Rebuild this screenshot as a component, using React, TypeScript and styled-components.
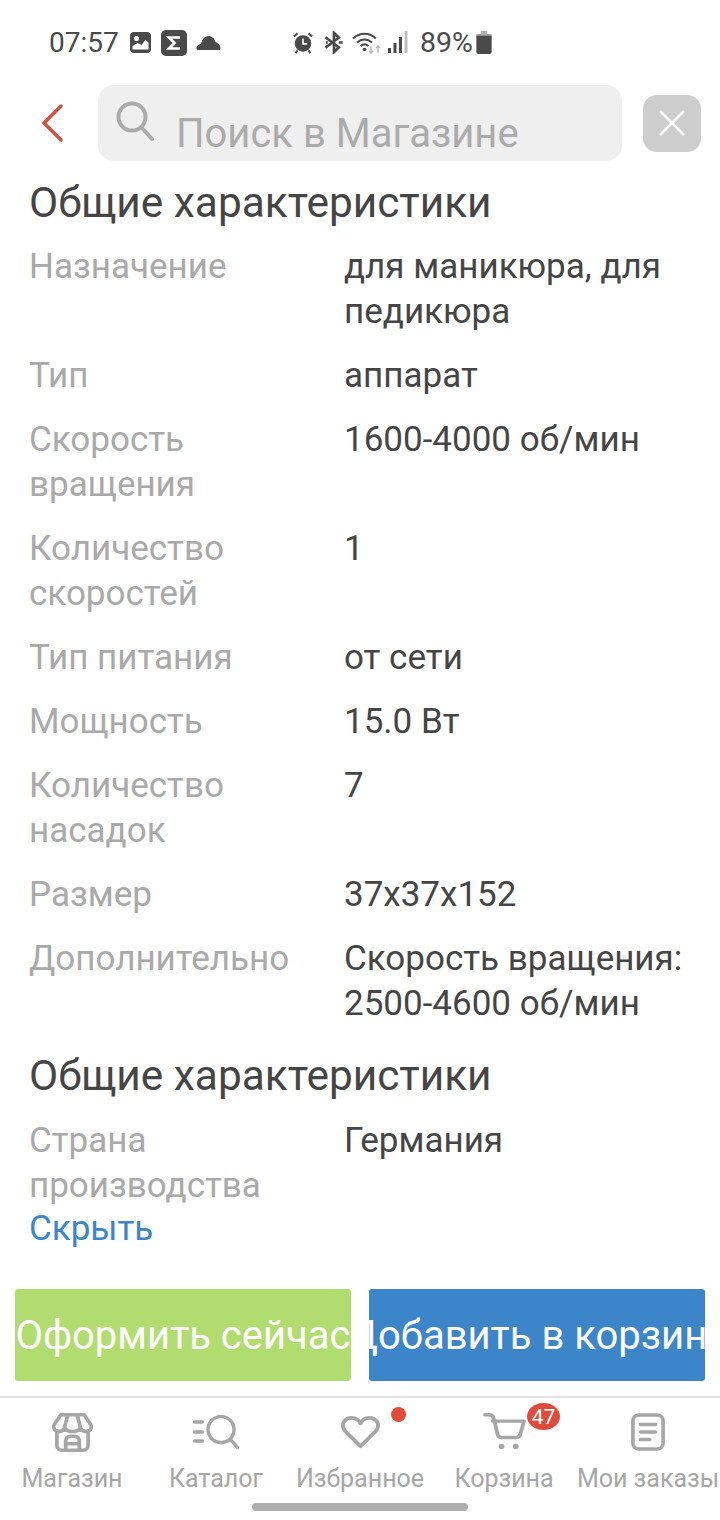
import React from "react";
import styled, { createGlobalStyle } from "styled-components";

const GlobalStyle = createGlobalStyle`
  html, body {
    margin: 0;
    padding: 0;
    background: #fff;
    font-family: Roboto, "Liberation Sans", sans-serif;
  }
`;

const Page = styled.div`
  width: 720px;
  height: 1520px;
  display: flex;
  flex-direction: column;
  overflow: hidden;
  background: #fff;
`;

const StatusBar = styled.div`
  height: 85px;
  flex: none;
  box-sizing: border-box;
  padding-left: 49px;
  display: flex;
  align-items: center;
  color: #4a4a4a;
  font-size: 28px;
`;

const StatusLeft = styled.div`
  width: 241px;
  display: flex;
  align-items: center;
  gap: 8px;
`;

const StatusRight = styled.div`
  display: flex;
  align-items: center;
  gap: 8px;
`;

const Clock = styled.span`
  width: 73px;
`;

const Percent = styled.span`
  font-size: 28.5px;
  margin-left: 4px;
`;

const Header = styled.header`
  flex: none;
  height: 76px;
  display: flex;
  align-items: center;
  padding-left: 41px;
`;

const BackButton = styled.div`
  width: 57px;
  height: 76px;
  display: flex;
  align-items: center;
`;

const SearchBox = styled.div`
  width: 524px;
  height: 76px;
  box-sizing: border-box;
  border-radius: 16px;
  background: #efefef;
  display: flex;
  padding-left: 18px;
`;

const SearchIcon = styled.svg`
  margin-top: 16px;
  flex: none;
`;

const SearchText = styled.span`
  margin: 26px 0 0 22px;
  font-size: 40px;
  line-height: 46px;
  color: #ababab;
`;

const CloseButton = styled.div`
  width: 58px;
  height: 57px;
  margin-left: 21px;
  border-radius: 14px;
  background: #cdcdcd;
  display: flex;
  align-items: center;
  justify-content: center;
`;

const Content = styled.main`
  flex: 1;
  padding: 17px 0 0 29px;
`;

const SectionTitle = styled.h2<{ $top?: number; $bottom?: number }>`
  margin: ${(p) => p.$top ?? 0}px 0 ${(p) => p.$bottom ?? 16}px;
  font-size: 42.4px;
  line-height: 50px;
  font-weight: 400;
  color: #454545;
`;

const SpecList = styled.dl`
  margin: 0;
  display: flex;
  flex-direction: column;
  gap: 19px;
`;

const SpecRow = styled.div`
  display: grid;
  grid-template-columns: 315px 1fr;
  font-size: 35px;
  line-height: 45px;
`;

const SpecName = styled.dt`
  color: #a9a9a9;
`;

const SpecValue = styled.dd`
  margin: 0;
  color: #454545;
  width: 350px;
`;

const HideLink = styled.div`
  font-size: 35px;
  line-height: 42px;
  color: #3b85c8;
`;

const Actions = styled.div`
  flex: none;
  display: grid;
  grid-template-columns: 336px 336px;
  gap: 18px;
  padding: 0 15px 15px;
`;

const ActionButton = styled.div<{ $bg: string }>`
  height: 92px;
  border-radius: 3px;
  background: ${(p) => p.$bg};
  color: #fff;
  font-size: 40px;
  display: flex;
  align-items: center;
  justify-content: center;
  white-space: nowrap;
  overflow: hidden;
`;

const TabBar = styled.nav`
  flex: none;
  height: 122px;
  border-top: 2px solid #e2e2e2;
  display: grid;
  grid-template-columns: repeat(5, 144px);
  position: relative;
`;

const Tab = styled.div`
  display: flex;
  flex-direction: column;
  align-items: center;
  padding-top: 12px;
  font-size: 25px;
  line-height: 30px;
  color: #a6a6a6;
  white-space: nowrap;
`;

const TabIcon = styled.div`
  position: relative;
  width: 44px;
  height: 44px;
  margin-bottom: 10px;
  display: flex;
  align-items: center;
  justify-content: center;

  svg {
    flex: none;
  }
`;

const Dot = styled.span`
  position: absolute;
  left: 53px;
  top: -3px;
  width: 15px;
  height: 15px;
  border-radius: 50%;
  background: #e04b3a;
`;

const CountBadge = styled.span`
  position: absolute;
  left: 45px;
  top: -7px;
  width: 33px;
  height: 27px;
  border-radius: 50%;
  background: #dc4b3b;
  color: #fff;
  font-size: 21px;
  line-height: 28px;
  text-align: center;
`;

const HomeIndicator = styled.div`
  position: absolute;
  left: 252px;
  bottom: 9px;
  width: 216px;
  height: 8px;
  border-radius: 4px;
  background: #adadad;
`;

const specs1 = [
  ["Назначение", "для маникюра, для педикюра"],
  ["Тип", "аппарат"],
  ["Скорость вращения", "1600-4000 об/мин"],
  ["Количество скоростей", "1"],
  ["Тип питания", "от сети"],
  ["Мощность", "15.0 Вт"],
  ["Количество насадок", "7"],
  ["Размер", "37x37x152"],
  ["Дополнительно", "Скорость вращения: 2500-4600 об/мин"],
];

const ImageIcon = () => (
  <svg width="21" height="21" viewBox="0 0 21 21">
    <rect x="0" y="0" width="21" height="21" rx="4" fill="#4a4a4a" />
    <circle cx="6.500" cy="6.500" r="2.500" fill="#fff" />
    <path d="M2.500 17.500v-3.500l5-3 4 2 4-5 3 2.500v7z" fill="#fff" />
  </svg>
);

const SigmaIcon = () => (
  <svg width="26" height="26" viewBox="0 0 26 26" style={{ marginLeft: 2 }}>
    <rect width="26" height="26" rx="5" fill="#4a4a4a" />
    <path d="M19 7.500H8l5.500 5.500L8 18.500h11" fill="none" stroke="#fff" strokeWidth="2.600" />
  </svg>
);

const CloudIcon = () => (
  <svg width="25" height="14" viewBox="0 0 25 14" style={{ marginLeft: 1 }}>
    <path d="M1 14c-1.500-2.500 0-5.500 4-6C6 3 9 0 12.500 0c3.500 0 6 2.500 7 6 3.500 1 6 4.500 4.500 8z" fill="#4a4a4a" />
  </svg>
);

const AlarmIcon = () => (
  <svg width="22" height="22" viewBox="0 0 22 24" style={{ marginLeft: 2 }}>
    <circle cx="11" cy="12.500" r="9" fill="#4a4a4a" />
    <path d="M11 7v6h4.500" fill="none" stroke="#fff" strokeWidth="1.800" />
    <path d="M1 5l4-3.500M21 5l-4-3.500M5 20l-2 3M17 20l2 3" stroke="#4a4a4a" strokeWidth="2.200" fill="none" />
  </svg>
);

const BluetoothIcon = () => (
  <svg width="20" height="23" viewBox="0 0 20 24" style={{ marginLeft: 2 }}>
    <path
      d="M1 6.500L15 17l-5 5V2l5 5L1 17.500"
      fill="none"
      stroke="#4a4a4a"
      strokeWidth="2.800"
    />
    <path d="M15 12h4M1.500 12h2" stroke="#4a4a4a" strokeWidth="2.800" />
  </svg>
);

const WifiIcon = () => (
  <svg width="30" height="24" viewBox="0 0 30 24">
    <path d="M1 7.500C7.500 1 17.500 1 24 7.500" fill="none" stroke="#4a4a4a" strokeWidth="2" />
    <path d="M5 11.500c4.500-4 10.500-4 15 0" fill="none" stroke="#4a4a4a" strokeWidth="2" />
    <path d="M8.500 15c2.500-2 5.500-2 8 0" fill="none" stroke="#4a4a4a" strokeWidth="2" />
    <circle cx="12.500" cy="18.500" r="1.800" fill="#4a4a4a" />
    <path d="M19 15v7m-2-2l2 2 2-2" fill="none" stroke="#b5b5b5" strokeWidth="1.300" />
    <path d="M26 22v-7m-2 2l2-2 2 2" fill="none" stroke="#b5b5b5" strokeWidth="1.300" />
  </svg>
);

const SignalIcon = () => (
  <svg width="20" height="23" viewBox="0 0 20 23" style={{ marginLeft: -2 }}>
    <rect x="0" y="17" width="3" height="5" fill="#4a4a4a" />
    <rect x="5.500" y="12" width="3" height="10" fill="#4a4a4a" />
    <rect x="11" y="6" width="3" height="16" fill="#4a4a4a" />
    <rect x="16.500" y="0" width="3" height="22" fill="#bdbdbd" />
  </svg>
);

const BatteryIcon = () => (
  <svg width="16" height="23" viewBox="0 0 16 24" style={{ marginLeft: -5 }}>
    <rect x="5" y="0" width="6" height="3" fill="#a8a8a8" />
    <rect x="0" y="3" width="16" height="3" rx="1" fill="#a8a8a8" />
    <path d="M0 5h16v17a2 2 0 0 1-2 2H2a2 2 0 0 1-2-2z" fill="#4a4a4a" />
  </svg>
);

const StoreIcon = () => (
  <svg width="41" height="39" viewBox="1 1 42 42" preserveAspectRatio="none" fill="none" stroke="#a6a6a6" strokeWidth="3.800" strokeLinejoin="round" strokeLinecap="round">
    <path d="M6 20v16a5 5 0 0 0 5 5h22a5 5 0 0 0 5-5V20" />
    <path d="M10 3h24l7 11c1 4-1.500 7-5 7-3 0-5-2-6-4-1 2-4 4-8 4s-7-2-8-4c-1 2-3 4-6 4-3.500 0-6-3-5-7z" />
    <path d="M17 4l-3 12M27 4l3 12" />
    <path d="M15 40V31a5 5 0 0 1 5-5h4a5 5 0 0 1 5 5v9M15 34h14" />
  </svg>
);

const CatalogIcon = () => (
  <svg width="46" height="34" viewBox="0 0 46 34" fill="none" stroke="#a6a6a6" strokeWidth="3.400" strokeLinecap="round">
    <circle cx="28" cy="14.500" r="13" />
    <path d="M38 25l7 8" />
    <path d="M1.500 7h8M1.500 17h8M1.500 26h8" />
  </svg>
);

const HeartIcon = () => (
  <svg width="39" height="33" viewBox="0 0 40 36" preserveAspectRatio="none" fill="none" stroke="#a6a6a6" strokeWidth="4" strokeLinejoin="round">
    <path d="M20 33L4 16C-1 9 4 2 11 2c4 0 7 2 9 6 2-4 5-6 9-6 7 0 12 7 7 14z" />
  </svg>
);

const CartIcon = () => (
  <svg width="43" height="38" viewBox="0 0 44 42" preserveAspectRatio="none" fill="none" stroke="#a6a6a6" strokeWidth="3.800" strokeLinejoin="round" strokeLinecap="round">
    <path d="M2 2h4c3 0 4.500 1.500 5 4l4 18c.5 2 2 3 4 3h15c2 0 3.500-1 4-3l4-15H10" />
    <circle cx="19" cy="37" r="3" fill="#a6a6a6" stroke="none" />
    <circle cx="33.500" cy="37" r="3" fill="#a6a6a6" stroke="none" />
  </svg>
);

const OrdersIcon = () => (
  <svg width="34" height="38" viewBox="0 0 36 40" fill="none" stroke="#a6a6a6" strokeWidth="3.800" strokeLinecap="round">
    <rect x="2" y="2" width="32" height="36" rx="6" />
    <path d="M10 12h16M10 20h16M10 28h10" />
  </svg>
);

export default function App() {
  return (
    <Page>
      <GlobalStyle />
      <StatusBar>
        <StatusLeft>
          <Clock>07:57</Clock>
          <ImageIcon />
          <SigmaIcon />
          <CloudIcon />
        </StatusLeft>
        <StatusRight>
          <AlarmIcon />
          <BluetoothIcon />
          <WifiIcon />
          <SignalIcon />
          <Percent>89%</Percent>
          <BatteryIcon />
        </StatusRight>
      </StatusBar>
      <Header>
        <BackButton>
          <svg width="22" height="38" viewBox="0 0 22 38" fill="none" stroke="#cf5340" strokeWidth="3.500" strokeLinecap="round">
            <path d="M20 2L3 19l17 17" />
          </svg>
        </BackButton>
        <SearchBox>
          <SearchIcon width="38" height="40" viewBox="0 0 38 40" fill="none" stroke="#ababab" strokeWidth="4" strokeLinecap="round">
            <circle cx="16" cy="16" r="13.500" />
            <path d="M26 27l10 11" />
          </SearchIcon>
          <SearchText>Поиск в Магазине</SearchText>
        </SearchBox>
        <CloseButton>
          <svg width="26" height="26" viewBox="0 0 26 26" stroke="#fff" strokeWidth="2.500">
            <path d="M1 1l24 24M25 1L1 25" />
          </svg>
        </CloseButton>
      </Header>
      <Content>
        <SectionTitle>Общие характеристики</SectionTitle>
        <SpecList>
          {specs1.map(([name, value]) => (
            <SpecRow key={name}>
              <SpecName>{name}</SpecName>
              <SpecValue>{value}</SpecValue>
            </SpecRow>
          ))}
        </SpecList>
        <SectionTitle $top={25} $bottom={17}>Общие характеристики</SectionTitle>
        <SpecRow>
          <SpecName>Страна производства</SpecName>
          <SpecValue>Германия</SpecValue>
        </SpecRow>
        <HideLink>Скрыть</HideLink>
      </Content>
      <Actions>
        <ActionButton $bg="#b1dc6f">Оформить сейчас</ActionButton>
        <ActionButton $bg="#3b85c8">Добавить в корзину</ActionButton>
      </Actions>
      <TabBar>
        <Tab>
          <TabIcon>
            <StoreIcon />
          </TabIcon>
          Магазин
        </Tab>
        <Tab>
          <TabIcon>
            <CatalogIcon />
          </TabIcon>
          Каталог
        </Tab>
        <Tab>
          <TabIcon>
            <HeartIcon />
            <Dot />
          </TabIcon>
          Избранное
        </Tab>
        <Tab>
          <TabIcon>
            <CartIcon />
            <CountBadge>47</CountBadge>
          </TabIcon>
          Корзина
        </Tab>
        <Tab>
          <TabIcon>
            <OrdersIcon />
          </TabIcon>
          Мои заказы
        </Tab>
        <HomeIndicator />
      </TabBar>
    </Page>
  );
}
